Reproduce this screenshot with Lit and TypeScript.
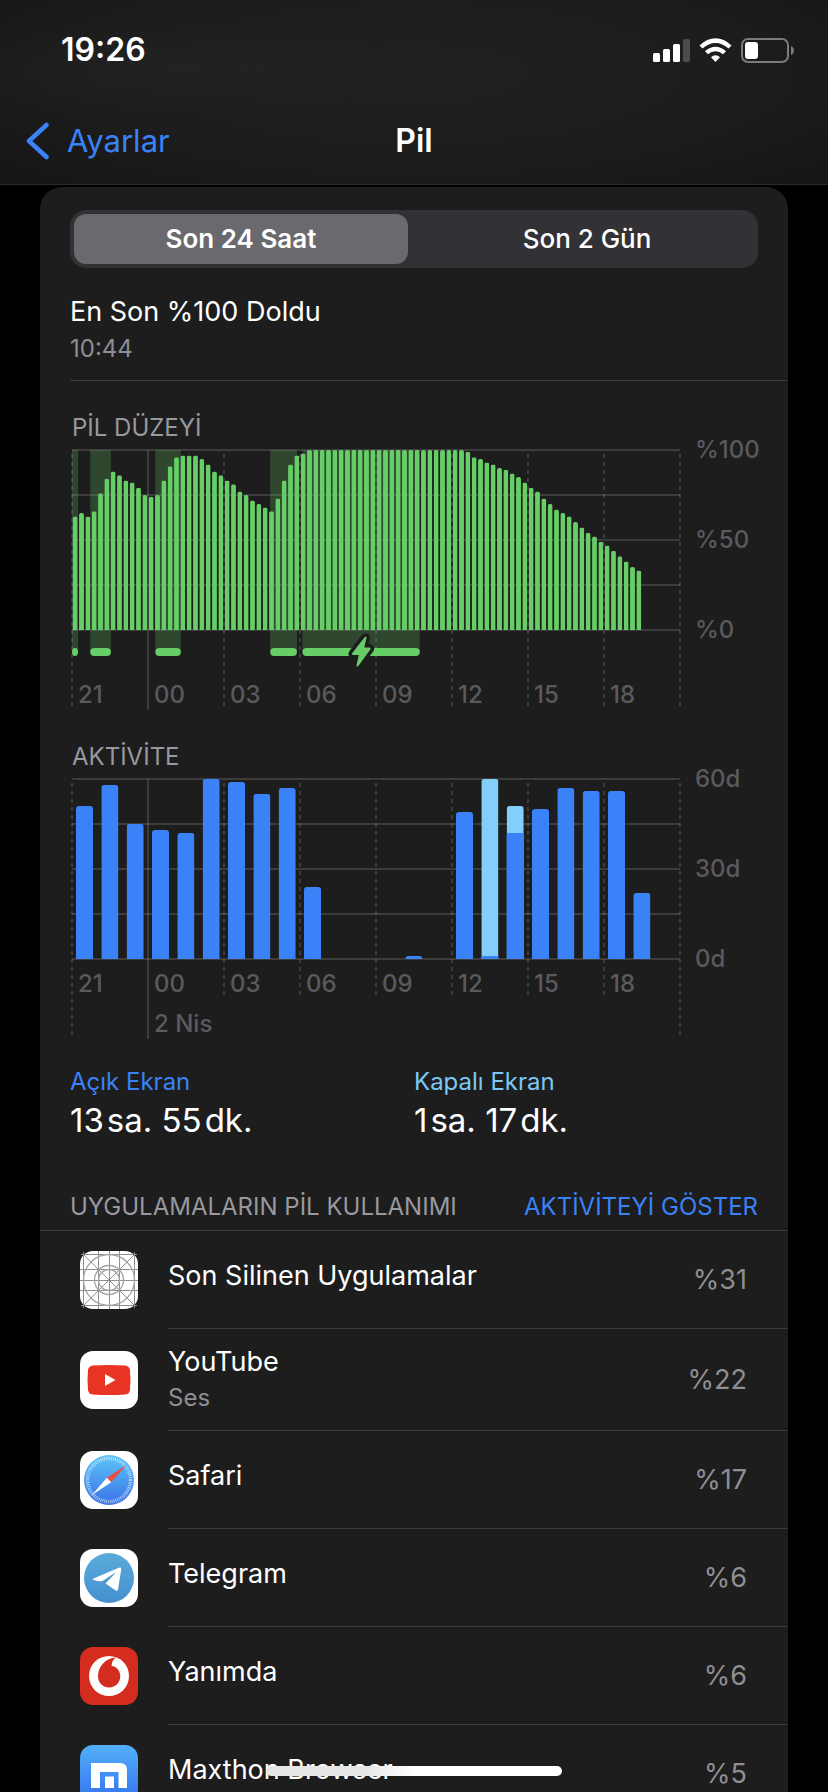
import { LitElement, html, svg, css, nothing } from "lit";
import type { SVGTemplateResult, TemplateResult } from "lit";
import { customElement, property, state } from "lit/decorators.js";
import { classMap } from "lit/directives/class-map.js";

const HOURS = ["21", "00", "03", "06", "09", "12", "15", "18"];
const PLOT_HEIGHT = 180;

/* Battery level in percent, one sample every fifteen minutes. */
const LEVELS = [
  63, 65, 63, 66, 76, 84, 88, 86, 83, 82, 79, 75, 74, 75, 83, 91, 96, 97, 97, 97,
  95, 92, 88, 86, 83, 81, 77, 75, 72, 70, 68, 66, 73, 83, 92, 97, 98,
  ...new Array(25).fill(100),
  99, 96, 95, 93, 92, 90, 89, 87, 85, 82, 79, 77, 73, 70, 67, 65, 63, 60, 57, 54,
  52, 49, 47, 44, 41, 38, 35, 33,
];

/* Charging spans, start and end in percent of the day shown. */
const CHARGES: [number, number][] = [
  [0, 1],
  [3, 6.4],
  [13.7, 17.9],
  [32.6, 37],
  [37.9, 57.2],
];

/* Minutes per hour: [screen on, screen off]. */
const ACTIVITY: [number, number][] = [
  [51, 0], [58, 0], [45, 0], [43, 0], [42, 0], [60, 0], [59, 0], [55, 0],
  [57, 0], [24, 0], [0, 0], [0, 0], [0, 0], [1, 0], [0, 0], [49, 0],
  [1, 59], [42, 9], [50, 0], [57, 0], [56, 0], [56, 0], [22, 0], [0, 0],
];

const gridLines = () =>
  [0, 1, 2, 3, 4].map(
    (i) => svg`<line class="grid" x1="0" x2="100%" y1=${i * 45} y2=${i * 45} />`
  );

const hourLines = (inner: number, outer: number, solid: number) =>
  [0, 1, 2, 3, 4, 5, 6, 7, 8].map((i) => {
    const x = `${i * 12.5}%`;
    if (i === 1) return svg`<line class="grid" x1=${x} x2=${x} y1="0" y2=${solid} />`;
    const end = i === 0 || i === 8 ? outer : inner;
    return svg`<line class="grid dashed" x1=${x} x2=${x} y1="0" y2=${end} />`;
  });

@customElement("battery-chart")
class BatteryChart extends LitElement {
  @property() heading = "";
  @property() kind: "level" | "activity" = "level";
  @property({ attribute: false }) axis: string[] = [];
  @property() date = "";

  static styles = css`
    :host {
      display: block;
      margin-top: 33px;
    }
    h2 {
      margin: 0 0 8px;
      padding-left: 2px;
      font-size: 24px;
      font-weight: 400;
      line-height: 28px;
      color: #98989f;
    }
    .chart {
      display: grid;
      grid-template-columns: minmax(0, 1fr) 108px;
    }
    .plot {
      display: grid;
      margin-left: 2px;
    }
    .plot > * {
      grid-area: 1 / 1;
    }
    .canvas {
      display: block;
      width: 100%;
      height: 260px;
      overflow: visible;
    }
    .clip {
      overflow: hidden;
    }
    .free {
      overflow: visible;
    }
    .grid {
      stroke: #8e8e93;
      stroke-opacity: 0.28;
      stroke-width: 2;
    }
    .dashed {
      stroke-dasharray: 4 4;
      stroke-dashoffset: 4;
    }
    .band {
      fill: #67ce67;
      fill-opacity: 0.24;
    }
    .level {
      fill: #67ce67;
    }
    .on {
      fill: #3a82f7;
    }
    .off {
      fill: #83cffb;
    }
    .bolt {
      fill: #67ce67;
      stroke: #1d1d1d;
      stroke-width: 7;
      stroke-linejoin: round;
      paint-order: stroke;
    }
    .labels {
      display: grid;
      grid-template-columns: repeat(8, minmax(0, 1fr));
      align-content: start;
      row-gap: 12px;
      padding-top: 231px;
      font-size: 24px;
      font-weight: 500;
      line-height: 28px;
      color: #5a5a5e;
    }
    .labels.near {
      padding-top: 191px;
    }
    .labels span {
      padding-left: 6px;
      white-space: nowrap;
    }
    .labels .date {
      grid-column: 2;
    }
    .axis {
      display: flex;
      flex-direction: column;
      justify-content: space-between;
      height: 208px;
      margin: -14px 0;
      padding-left: 15px;
      font-size: 24px;
      font-weight: 500;
      line-height: 28px;
      color: #5a5a5e;
    }
  `;

  private column(x: number, w: number, top: number, r: number, cls: string) {
    const height = PLOT_HEIGHT - top;
    return svg`
      <svg class="clip" x="${x}%" y=${top} width="${w}%" height=${height}>
        <rect class=${cls} width="100%" height=${height + 4} rx=${r} ry=${r} />
      </svg>`;
  }

  private levels(): SVGTemplateResult {
    const step = 100 / 96;
    return svg`
      ${CHARGES.map(([a, b]) => svg`<rect class="band" x="${a}%" width="${b - a}%" y="0" height="202" />`)}
      ${gridLines()}
      ${hourLines(256, 256, 260)}
      ${LEVELS.map((v, i) =>
        this.column(i * step + 0.12, step - 0.24, PLOT_HEIGHT - v * 1.8, 2, "level")
      )}
      ${CHARGES.map(([a, b]) => svg`<rect class="level" x="${a}%" width="${b - a}%" y="198" height="8" rx="4" />`)}
      <svg class="free" x="47.5%" y="200">
        <path class="bolt"
          d="M4 -13 Q6 -14 5.600 -12 L3.500 -2.500 H9 Q10.500 -2 9.500 -0.500 L-2.500 16 Q-4.500 17.500 -4.200 15 L-2 5 H-8 Q-9.500 4.500 -8.500 3 Z" />
      </svg>`;
  }

  private activity(): SVGTemplateResult {
    const step = 100 / 24;
    return svg`
      ${gridLines()}
      ${hourLines(216, 256, 260)}
      ${ACTIVITY.map(([on, off], i) => {
        const x = i * step + 0.66;
        const w = step - 1.36;
        const top = PLOT_HEIGHT - (on + off) * 3;
        return svg`
          ${on + off > 0 ? this.column(x, w, top, 3, off ? "off" : "on") : nothing}
          ${off ? svg`<rect class="on" x="${x}%" width="${w}%" y=${PLOT_HEIGHT - on * 3} height=${on * 3} />` : nothing}`;
      })}`;
  }

  render() {
    const isLevel = this.kind === "level";
    return html`
      <h2>${this.heading}</h2>
      <div class="chart">
        <div class="plot">
          <svg class="canvas" role="img" aria-label=${this.heading}>
            ${isLevel ? this.levels() : this.activity()}
          </svg>
          <div class=${classMap({ labels: true, near: !isLevel })}>
            ${HOURS.map((h) => html`<span>${h}</span>`)}
            ${this.date ? html`<span class="date">${this.date}</span>` : nothing}
          </div>
        </div>
        <div class="axis">${this.axis.map((a) => html`<span>${a}</span>`)}</div>
      </div>
    `;
  }
}

const gridIcon = html`<svg viewBox="0 0 58 58">
  <rect width="58" height="58" rx="13" fill="#fff" />
  <g fill="none" stroke="#8f8f8f" stroke-width="1">
    <path d="M3.500 1V57M18.500 0V58M29.500 0V58M39.500 0V58M54.500 1V57M1 3.500H57M0 18.500H58M0 29.500H58M0 39.500H58M1 54.500H57M3 3L55 55M55 3L3 55" />
    <g stroke="#a4a4a4" stroke-width="1.300">
      <circle cx="29" cy="29" r="25.500" />
      <circle cx="29" cy="29" r="14.500" />
      <circle cx="29" cy="29" r="10.500" />
    </g>
  </g>
</svg>`;

const youtubeIcon = html`<svg viewBox="0 0 58 58">
  <rect width="58" height="58" rx="13" fill="#fff" />
  <path fill="#e93323" d="M13 14.500Q29 13.500 45 14.500Q49.500 15 50 19Q51 29 50 39Q49.500 43 45 43.500Q29 44.500 13 43.500Q8.500 43 8 39Q7 29 8 19Q8.500 15 13 14.500Z" />
  <path fill="#fff" d="M25 23V35L35.500 29Z" />
</svg>`;

const safariIcon = html`<svg viewBox="0 0 58 58">
  <defs>
    <linearGradient id="sea" x1="0" y1="0" x2="0" y2="1">
      <stop offset="0" stop-color="#5cc5f8" />
      <stop offset="1" stop-color="#3a72e8" />
    </linearGradient>
  </defs>
  <rect width="58" height="58" rx="13" fill="#fff" />
  <circle cx="29" cy="29" r="25" fill="url(#sea)" />
  <circle cx="29" cy="29" r="21.500" fill="none" stroke="#fff" stroke-opacity="0.75" stroke-width="3.500" stroke-dasharray="0.700 1.176" />
  <path fill="#ea4e3d" d="M46.500 14L26.800 26.800L31.200 31.200Z" />
  <path fill="#fff" d="M12 44L26.800 26.800L31.200 31.200Z" />
</svg>`;

const telegramIcon = html`<svg viewBox="0 0 58 58">
  <defs>
    <linearGradient id="sky" x1="0" y1="0" x2="0" y2="1">
      <stop offset="0" stop-color="#5aabdb" />
      <stop offset="1" stop-color="#458fcf" />
    </linearGradient>
  </defs>
  <rect width="58" height="58" rx="13" fill="#fff" />
  <circle cx="29" cy="29" r="25" fill="url(#sky)" />
  <path fill="#fff" d="M13.500 29.500L39.500 18.600Q41.500 18 41.200 20.500L38 40.800Q37.500 42.600 35.800 41.600L25.500 34.500L35.200 24.200Q34.800 23.800 34.200 24.200L22.500 32Q20 33 13.500 31Q12 30.300 13.500 29.500Z" />
</svg>`;

const vodafoneIcon = html`<svg viewBox="0 0 58 58">
  <rect width="58" height="58" rx="13" fill="#d42d1f" />
  <circle cx="29" cy="29" r="20" fill="#fff" />
  <path fill="#d42d1f" d="M36 10.500Q32 13 31.500 18.800C36 19.500 40.300 23.500 40.300 29.300C40.300 35.500 35.500 40.500 29.300 40.500C23 40.500 18 35.800 18 29C18 20 25.500 10.600 36 10.500Z" />
</svg>`;

const maxthonIcon = html`<svg viewBox="0 0 58 58">
  <defs>
    <linearGradient id="deep" x1="0" y1="0" x2="0" y2="1">
      <stop offset="0" stop-color="#52b0fa" />
      <stop offset="1" stop-color="#3470ee" />
    </linearGradient>
  </defs>
  <rect width="58" height="58" rx="13" fill="url(#deep)" />
  <path fill="#fff" d="M11 18H40Q47 18 47 25V43H38.500V27H20V43H11Z" />
  <path fill="#fff" d="M25 31.500H34V43H25Z" />
</svg>`;

interface AppUsage {
  name: string;
  detail?: string;
  share: string;
  icon: TemplateResult;
}

const APPS: AppUsage[] = [
  { name: "Son Silinen Uygulamalar", share: "%31", icon: gridIcon },
  { name: "YouTube", detail: "Ses", share: "%22", icon: youtubeIcon },
  { name: "Safari", share: "%17", icon: safariIcon },
  { name: "Telegram", share: "%6", icon: telegramIcon },
  { name: "Yanımda", share: "%6", icon: vodafoneIcon },
  { name: "Maxthon Browser", share: "%5", icon: maxthonIcon },
];

@customElement("app-root")
class AppRoot extends LitElement {
  @state() private range = "day";

  static styles = css`
    :host {
      display: flex;
      flex-direction: column;
      height: 100vh;
      overflow: hidden;
      background: #000;
      color: #fff;
      font-family: Inter, "Liberation Sans", sans-serif;
    }
    * {
      box-sizing: border-box;
    }
    a {
      color: #3a82f7;
      text-decoration: none;
    }
    .top {
      flex: none;
      border-bottom: 1px solid #2b2b2b;
      background:
        radial-gradient(ellipse at 18% 38%, rgba(255, 255, 255, 0.02), transparent 30%),
        radial-gradient(ellipse at 50% 40%, #212121, #1c1c1c 60%, #151515);
    }
    .status {
      display: flex;
      align-items: center;
      justify-content: space-between;
      height: 98px;
      padding: 1px 34px 0 61px;
      font-size: 32px;
      font-weight: 600;
      line-height: 40px;
    }
    .status svg {
      display: block;
      width: 142px;
      height: 28px;
    }
    nav {
      display: grid;
      grid-template-columns: 1fr auto 1fr;
      align-items: center;
      height: 86px;
      padding: 0 26px;
      font-size: 31px;
      line-height: 40px;
    }
    .back {
      display: flex;
      align-items: center;
      gap: 18px;
    }
    .back svg {
      display: block;
      width: 23px;
      height: 38px;
    }
    h1 {
      margin: 0;
      font-size: 32px;
      font-weight: 600;
    }
    main {
      flex: 1;
      min-height: 0;
      overflow-y: auto;
      scrollbar-width: none;
      padding: 2px 40px 0;
    }
    .card {
      border-radius: 22px 22px 0 0;
      background: #1d1d1d;
      padding-top: 23px;
    }
    .inset {
      padding-left: 30px;
    }
    .segments {
      display: grid;
      grid-template-columns: 1fr 1fr;
      column-gap: 12px;
      height: 58px;
      margin: 0 30px 27px;
      padding: 4px;
      border: 0;
      border-radius: 16px;
      background: #323136;
    }
    .segments label {
      display: flex;
      align-items: center;
      justify-content: center;
      border-radius: 12px;
      font-size: 26px;
      font-weight: 500;
      line-height: 32px;
    }
    .segments label.chosen {
      background: #6a696e;
      font-weight: 600;
    }
    .segments input {
      appearance: none;
      width: 0;
      height: 0;
      margin: 0;
    }
    .charged {
      padding-bottom: 17px;
      border-bottom: 1px solid #3a3a3c;
    }
    .charged p {
      margin: 0;
      font-size: 27px;
      line-height: 34px;
    }
    .charged .time {
      margin-top: 6px;
      font-size: 24px;
      line-height: 28px;
      color: #8e8e93;
    }
    .totals {
      display: grid;
      grid-template-columns: 1fr 1fr;
      margin: 29px 30px 0 0;
    }
    dl {
      margin: 0;
    }
    dt {
      font-size: 24px;
      line-height: 28px;
      color: #3a82f7;
    }
    dt.off {
      color: #7cc8f5;
    }
    dd {
      margin: 4px 0 0;
      font-size: 33px;
      line-height: 40px;
    }
    .listhead {
      display: flex;
      justify-content: space-between;
      padding: 53px 30px 9px;
      border-bottom: 1px solid #3a3a3c;
      font-size: 24px;
      line-height: 28px;
      color: #98989f;
    }
    .listhead h2 {
      margin: 0;
      font-size: 24px;
      font-weight: 400;
    }
    ul {
      margin: 0;
      padding: 0;
      list-style: none;
    }
    li {
      display: flex;
      align-items: center;
      gap: 30px;
      padding-left: 40px;
    }
    li svg {
      flex: none;
      display: block;
      width: 58px;
      height: 58px;
    }
    .row {
      flex: 1;
      display: flex;
      align-items: center;
      justify-content: space-between;
      padding-right: 41px;
      border-bottom: 1px solid #3a3a3c;
      font-size: 27px;
      line-height: 34px;
    }
    .row p {
      margin: 0;
    }
    .text {
      padding: 28px 0 35px;
    }
    .text.detailed {
      padding: 16px 0 18px;
    }
    .text .detail {
      margin-top: 5px;
      font-size: 24px;
      line-height: 28px;
      color: #8e8e93;
    }
    .share {
      color: #8e8e93;
    }
    .home {
      position: fixed;
      left: 50%;
      bottom: 16px;
      width: 296px;
      height: 10px;
      margin-left: -148px;
      border-radius: 5px;
      background: linear-gradient(90deg, #e6e6e6 33%, #fff 50%);
    }
  `;

  private segment(value: string, text: string) {
    const chosen = this.range === value;
    return html`<label class=${classMap({ chosen })}>
      <input type="radio" name="range" .checked=${chosen} @change=${() => (this.range = value)} />${text}
    </label>`;
  }

  render() {
    return html`
      <header class="top">
        <div class="status">
          <span>19:26</span>
          <svg viewBox="0 0 142 28" aria-hidden="true">
            <g fill="#fff">
              <rect x="1" y="17" width="7" height="9" rx="1.500" />
              <rect x="11" y="13" width="7" height="13" rx="1.500" />
              <rect x="21" y="8" width="7" height="18" rx="1.500" />
              <rect x="31" y="3" width="7" height="23" rx="1.500" fill="#4c4c4c" />
              <path d="M47.500 9.500Q55 2.300 63.500 2.300T79.500 9.500L76.500 12.600Q70.500 7 63.500 7T50.500 12.600Z" />
              <path d="M53 15.200Q57.800 10.700 63.500 10.700T74 15.200L71 18.200Q67.600 15.200 63.500 15.200T56 18.200Z" />
              <path d="M59 21.200Q61 19.200 63.500 19.200T68 21.200L63.500 26Z" />
              <rect x="93" y="6" width="13" height="17" rx="3" />
            </g>
            <rect x="90" y="3" width="46" height="23" rx="6" fill="none" stroke="#7b7b7b" stroke-width="2" />
            <path d="M139 10Q142 11.500 142 14.500T139 19Z" fill="#7b7b7b" />
          </svg>
        </div>
        <nav>
          <a class="back" href="#">
            <svg viewBox="0 0 23 38" aria-hidden="true">
              <path d="M20.500 3L3 19L20.500 35" fill="none" stroke="#3a82f7" stroke-width="4.500" stroke-linecap="round" stroke-linejoin="round" />
            </svg>
            Ayarlar
          </a>
          <h1>Pil</h1>
        </nav>
      </header>
      <main>
        <section class="card">
          <fieldset class="segments">
            ${this.segment("day", "Son 24 Saat")} ${this.segment("days", "Son 2 Gün")}
          </fieldset>
          <div class="inset">
            <div class="charged">
              <p>En Son %100 Doldu</p>
              <p class="time">10:44</p>
            </div>
            <battery-chart heading="PİL DÜZEYİ" kind="level" .axis=${["%100", "%50", "%0"]}></battery-chart>
            <battery-chart heading="AKTİVİTE" kind="activity" date="2 Nis" .axis=${["60d", "30d", "0d"]}></battery-chart>
            <dl class="totals">
              <div>
                <dt>Açık Ekran</dt>
                <dd>13\u200asa. 55\u200adk.</dd>
              </div>
              <div>
                <dt class="off">Kapalı Ekran</dt>
                <dd>1\u200asa. 17\u200adk.</dd>
              </div>
            </dl>
          </div>
          <div class="listhead">
            <h2>UYGULAMALARIN PİL KULLANIMI</h2>
            <a href="#">AKTİVİTEYİ GÖSTER</a>
          </div>
          <ul>
            ${APPS.map(
              (app) => html`<li>
                ${app.icon}
                <div class="row">
                  <div class=${classMap({ text: true, detailed: !!app.detail })}>
                    <p>${app.name}</p>
                    ${app.detail ? html`<p class="detail">${app.detail}</p>` : nothing}
                  </div>
                  <span class="share">${app.share}</span>
                </div>
              </li>`
            )}
          </ul>
        </section>
      </main>
      <div class="home"></div>
    `;
  }
}
